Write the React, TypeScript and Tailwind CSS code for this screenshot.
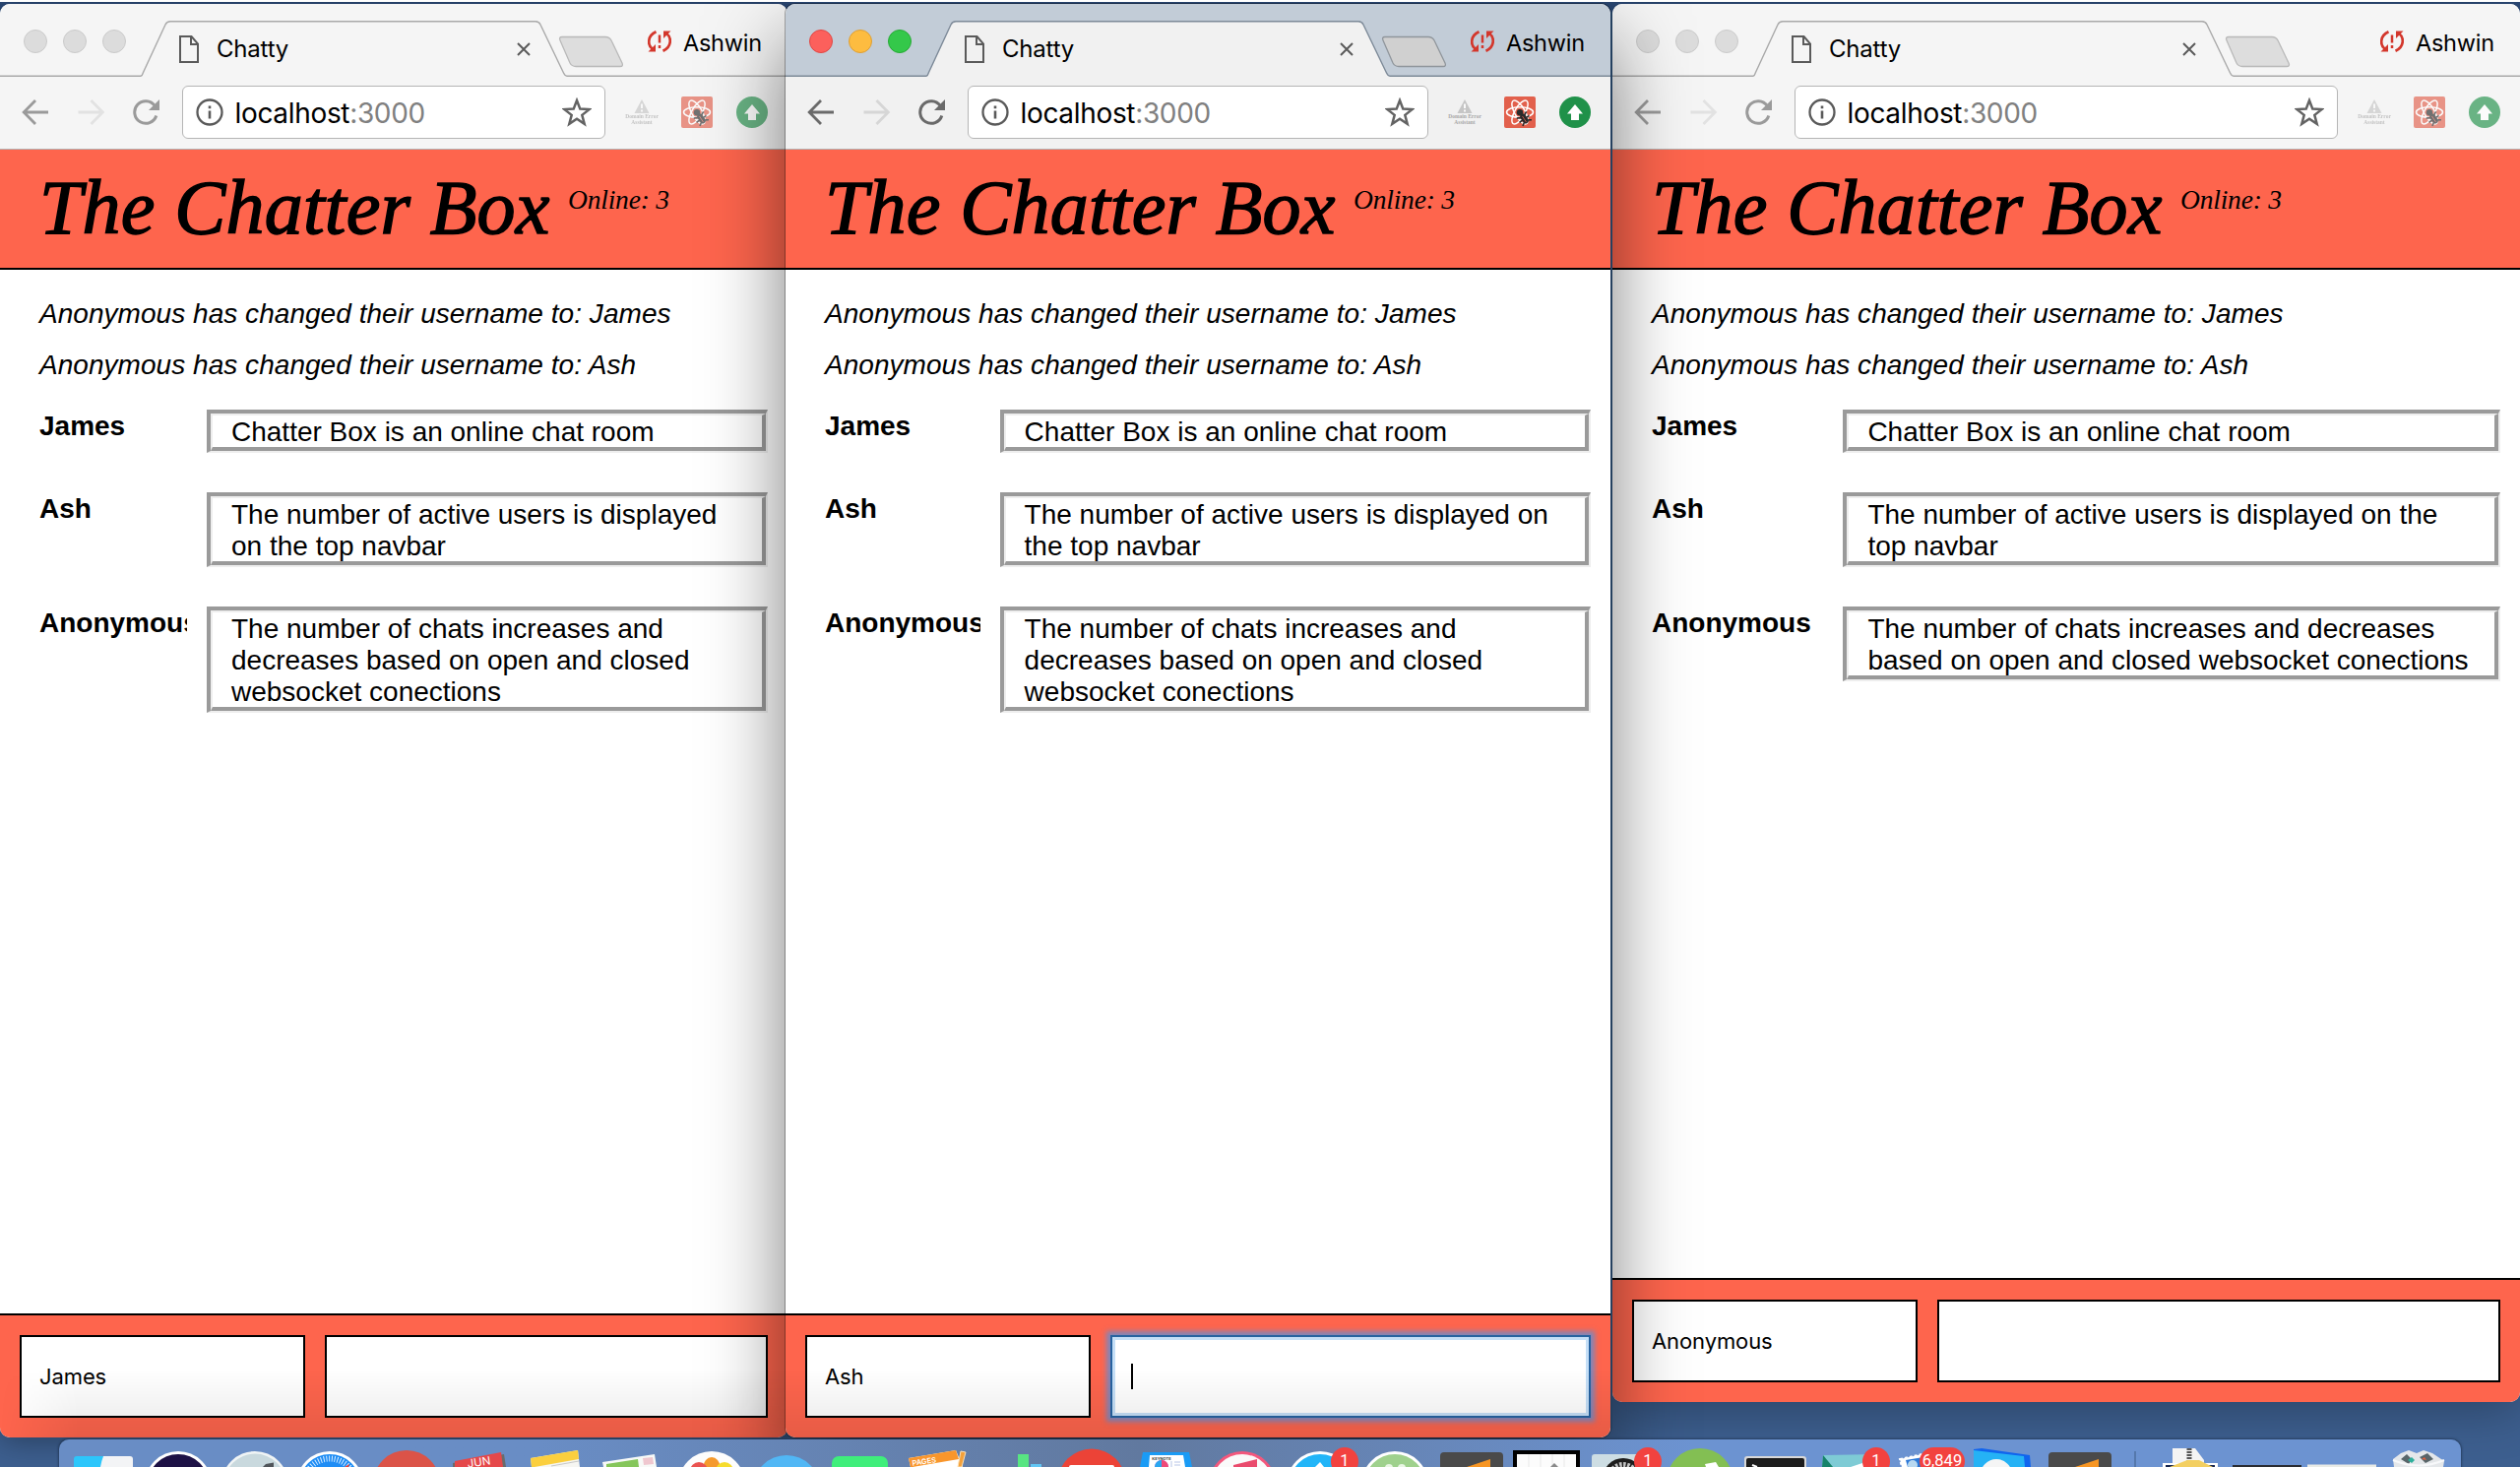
import React from "react";

type WinProps = {
  active?: boolean;
  width: number;
  frame: string;
  user: string;
};

const NOTICES = [
  "Anonymous has changed their username to: James",
  "Anonymous has changed their username to: Ash",
];

const MESSAGES = [
  { name: "James", text: "Chatter Box is an online chat room" },
  { name: "Ash", text: "The number of active users is displayed on the top navbar" },
  {
    name: "Anonymous",
    text: "The number of chats increases and decreases based on open and closed websocket conections",
  },
];

const MAX_TAB_RIGHT = 603;

function TabOutline({ width, active }: { width: number; active?: boolean }) {
  const r = Math.min(width - 252, MAX_TAB_RIGHT);
  const line = active ? "#7d8a98" : "#a9a9a9";
  const d = `M0 73.2 H143 Q144.5 73 145.3 70 L168 21 Q169.5 17.8 173 17.8 H${r - 4} Q${r - 0.5} 17.8 ${r + 1} 21 L${r + 24.5} 70 Q${r + 26} 73.2 ${r + 28} 73.2 H${width}`;
  return (
    <svg className="absolute left-0 top-0" width={width} height="74" viewBox={`0 0 ${width} 74`} fill="none">
      <path d={d + " V75 H0 Z"} fill={active ? "#f1f1f1" : "#f5f5f5"} />
      <path d={d} stroke={line} strokeWidth="1.4" />
      <path
        d={`M${r + 23} 33.5 H${r + 67} Q${r + 71} 33.5 ${r + 73} 37 L${r + 84} 60 Q${r + 85.5} 63.5 ${r + 82} 63.5 H${r + 37} Q${r + 33} 63.5 ${r + 31} 60 L${r + 21} 37 Q${r + 19.5} 33.5 ${r + 23} 33.5 Z`}
        fill={active ? "#d0d0d0" : "#dddddd"}
        stroke={active ? "#8f959b" : "#b9b9b9"}
        strokeWidth="1.3"
      />
    </svg>
  );
}

function ReactBadge() {
  return (
    <svg width="32" height="32" viewBox="0 0 32 32" fill="none">
      <rect width="32" height="32" rx="2" fill="#e2604c" />
      <g stroke="#fff" strokeWidth="1.5">
        <ellipse cx="16" cy="16" rx="13.5" ry="5.2" />
        <ellipse cx="16" cy="16" rx="13.5" ry="5.2" transform="rotate(60 16 16)" />
        <ellipse cx="16" cy="16" rx="13.5" ry="5.2" transform="rotate(120 16 16)" />
      </g>
      <circle cx="16" cy="16.2" r="3.2" fill="#2b2b2b" />
      <g transform="rotate(-35 20 22)" fill="#2b2b2b">
        <rect x="17.2" y="17.5" width="5.8" height="10.500" rx="2.800" />
        <path d="M14 18l4 2M14 23h4M14.5 28l3-2M26 18l-4 2M26 23h-4M25.5 28l-3-2" stroke="#2b2b2b" strokeWidth="1.600" />
      </g>
      <path d="M18.5 20l4 6" stroke="#e2604c" strokeWidth=".8" />
    </svg>
  );
}

function Chrome({ width, active }: { width: number; active?: boolean }) {
  const dots = active
    ? ["bg-[#fc605c] border-[#df4744]", "bg-[#fdbc40] border-[#de9f34]", "bg-[#34c84a] border-[#27aa35]"]
    : ["bg-[#dcdcdc] border-[#cbcbcb]", "bg-[#dcdcdc] border-[#cbcbcb]", "bg-[#dcdcdc] border-[#cbcbcb]"];
  const nav = active ? "#6a6a6a" : "#9a9a9a";
  const off = active ? "#d6d6d6" : "#e2e2e2";
  return (
    <div className="font-[Inter,sans-serif] text-black">
      <div className={`relative h-[74px] ${active ? "bg-[#c2ccd7]" : "bg-[#f5f5f5]"}`}>
        <TabOutline width={width} active={active} />
        <div className="relative flex items-start">
          <div className="flex gap-4 pl-6 pt-[26px]">
            {dots.map((c, i) => (
              <span key={i} className={`size-6 rounded-full border ${c}`} />
            ))}
          </div>
          <svg className="ml-[54px] mt-8" width="20" height="28" viewBox="0 0 20 28" fill="none" stroke="#5a5a5a" strokeWidth="2">
            <path d="M1 1 H12.5 L19 8.500 V27 H1 Z" />
            <path d="M12 1 V9 H19" />
          </svg>
          <span className="ml-[18px] mt-[31px] text-[24px] leading-[30px] tracking-[-0.2px]">Chatty</span>
          <div className="grow" />
          <svg className="mt-[39px]" width="14" height="14" viewBox="0 0 14 14" stroke="#5a5a5a" strokeWidth="2">
            <path d="M1 1 L13 13 M13 1 L1 13" />
          </svg>
          <div className={`flex items-start justify-end pr-[26px] ${width > 900 ? "w-[329px]" : "w-[261px]"}`}>
            <svg className="mt-[27px]" width="24" height="22" viewBox="0 0 24 22" fill="none" stroke="#d3372c" strokeWidth="2.7">
              <path d="M8.500 1.200 C-0.500 5 -0.500 15 5 19" />
              <path d="M15.500 20.800 C24.500 17 24.500 7 19 3" />
              <path d="M0.500 21.500 H8 V14 Z" fill="#d3372c" stroke="none" />
              <path d="M23.500 0.500 H16 V8 Z" fill="#d3372c" stroke="none" />
              <path d="M12 4.500 V12.500 M12 15 V18" strokeWidth="2.500" />
            </svg>
            <span className="ml-3 mt-[25px] text-[23.500px] leading-[30px] tracking-[-0.2px]">Ashwin</span>
          </div>
        </div>
      </div>
      <div className={`flex h-[74px] items-center border-b pb-px pr-5 ${active ? "border-[#b4b4b4] bg-[#f1f1f1]" : "border-[#b4b4b4] bg-[#f5f5f5]"}`}>
        <svg className="ml-[22px] shrink-0" width="28" height="26" viewBox="0 0 28 26" fill="none" stroke={nav} strokeWidth="2.800">
          <path d="M27 13 H2.500 M14 1 L2.200 13 L14 25" />
        </svg>
        <svg className="ml-[29px] shrink-0" width="28" height="26" viewBox="0 0 28 26" fill="none" stroke={off} strokeWidth="2.800">
          <path d="M0.500 13 H25 M13.500 1 L25.300 13 L13.500 25" />
        </svg>
        <svg className="ml-[27px] shrink-0" width="28" height="28" viewBox="0 0 28 28" fill="none" stroke={nav} strokeWidth="3">
          <path d="M23.300 7.500 A11.300 11.300 0 1 0 24.800 17.500" />
          <path d="M28 1 V12 H17 Z" fill={nav} stroke="none" />
        </svg>
        <div className="ml-[23px] flex h-[54px] grow items-center rounded-[6px] border-[1.500px] border-[#b5b5b5] bg-white pl-[12.500px] pr-[13px]">
          <svg width="28" height="28" viewBox="0 0 28 28" fill="none" stroke="#5a5a5a" strokeWidth="2.300">
            <circle cx="14" cy="14" r="12.500" />
            <path d="M14 12.500 V20.500 M14 7.500 V10.300" strokeWidth="2.600" />
          </svg>
          <span className="ml-3 mt-[2px] text-[28px] leading-[34px] tracking-[-0.33px]">
            localhost<span className="text-[#808080]">:3000</span>
          </span>
          <div className="grow" />
          <svg width="30" height="30" viewBox="0 0 30 30" fill="none" stroke="#636363" strokeWidth="2.500">
            <path d="M15 3 L18.300 11.600 L27.500 12.100 L20.300 17.900 L22.700 26.800 L15 21.800 L7.300 26.800 L9.700 17.900 L2.500 12.100 L11.700 11.600 Z" />
          </svg>
        </div>
        <div className={`ml-[21px] flex items-center gap-6 ${active ? "" : "opacity-65"}`}>
          <div className="flex w-8 flex-col items-center">
            <svg width="16" height="14" viewBox="0 0 16 14">
              <path d="M8 0 L15.500 14 H0.500 Z" fill="#c6c6c6" />
              <path d="M8 4.500 V9 M8 10.500 V12.500" stroke="#fff" strokeWidth="1.800" />
            </svg>
            <span className="mt-px whitespace-nowrap text-center font-['Liberation_Serif',serif] text-[5.500px] font-bold leading-[5.500px] text-[#a8a8a8]">
              Domain Error
              <br />
              Assistant
            </span>
          </div>
          <ReactBadge />
          <svg width="32" height="32" viewBox="0 0 32 32">
            <circle cx="16" cy="16" r="16" fill="#1f9149" />
            <path d="M16 8 L24 17.500 H20 V24 H12 V17.500 H8 Z" fill="#fff" />
          </svg>
        </div>
      </div>
    </div>
  );
}

function ChatWindow({ active, width, frame, user }: WinProps) {
  return (
    <section className={`absolute top-1 flex flex-col overflow-hidden rounded-[10px] bg-white ${frame}`}>
      <Chrome width={width} active={active} />
      <header className="flex h-[122px] shrink-0 items-start border-b-2 border-black bg-[#fe654d] pl-10 font-['Apple_Chancery','Liberation_Serif',serif] italic text-black">
        <h1 className="mt-[9px] w-[537px] shrink-0 whitespace-nowrap text-[78px] leading-[100px] tracking-[0.2px] [-webkit-text-stroke:1.500px_black]">
          The Chatter Box
        </h1>
        <span className="mt-[33px] whitespace-nowrap text-[27.500px] leading-9 tracking-[-0.2px]">Online: 3</span>
      </header>
      <main className="grow pl-10 pr-5 pt-[29px] font-['Liberation_Sans',sans-serif] text-[28px] leading-8 text-black">
        <div className="flex flex-col gap-5 italic">
          {NOTICES.map((n) => (
            <p key={n} className="whitespace-nowrap tracking-[0.04px]">{n}</p>
          ))}
        </div>
        <div className="mt-[29px] flex flex-col gap-10">
          {MESSAGES.map((m) => (
            <div key={m.name} className="flex items-start gap-5">
              <div className="w-[calc((100%+10px)/5)] shrink-0 overflow-hidden pt-px font-bold">{m.name}</div>
              <div className="grow border-b-2 border-l-4 border-r-2 border-t-4 border-b-[#eeeeee] border-l-[#9a9a9a] border-r-[#eeeeee] border-t-[#9a9a9a]">
                <div className="border-b-4 border-l-2 border-r-4 border-t-2 border-b-[#9a9a9a] border-l-[#eeeeee] border-r-[#9a9a9a] border-t-[#eeeeee] pl-[19px] pr-5">
                  <p className="-mb-px pt-px">{m.text}</p>
                </div>
              </div>
            </div>
          ))}
        </div>
      </main>
      <footer className="flex h-[126px] shrink-0 gap-5 border-t-2 border-black bg-[#fe654d] px-5 pt-5 font-[Inter,sans-serif] text-[22px] text-black">
        <div className="flex h-[84px] w-[290px] shrink-0 items-center border-2 border-black bg-white pl-[18px] leading-7 tracking-[-0.1px]">
          {user}
        </div>
        {active ? (
          <div className="flex h-[84px] grow items-center border-2 border-[#2763a0] bg-white pl-[19px] shadow-[0_0_5px_4px_rgba(106,140,205,0.85),inset_0_0_0_3px_#c5dff7]">
            <span className="h-[26px] w-0.5 bg-black" />
          </div>
        ) : (
          <div className="h-[84px] grow border-2 border-black bg-white" />
        )}
      </footer>
    </section>
  );
}

function CountBadge({ x, w, label }: { x: number; w: number; label: string }) {
  return (
    <g>
      <rect x={x - w / 2} y="8" width={w} height="29" rx="14.500" fill="#f2423f" />
      <text x={x} y="27" textAnchor="middle" fontSize="16.500" fill="#fff" fontFamily="Roboto, sans-serif">
        {label}
      </text>
    </g>
  );
}

function Sublime({ x }: { x: number }) {
  return (
    <g>
      <rect x={x - 32} y="13" width="64" height="60" rx="4" fill="#4a4a4a" />
      <path d={`M${x - 14} 31 L${x + 19} 20 V40 H${x - 14} Z`} fill="#f79522" />
    </g>
  );
}

function DockIcons() {
  return (
    <svg className="block" width="2440" height="28" viewBox="60 0 2440 28">
      <path d="M78 17 H165 L160 28 H75 V20 Q75 17 78 17" fill="none" />
      <path d="M78 17 H107 L102 28 H75 V20 Q75 17 78 17" fill="#2cc6fb" />
      <path d="M105 17 H132 Q135 17 135 20 V28 H102 Q103 22 105 17" fill="#f3f4f6" />

      <circle cx="181" cy="46" r="34" fill="#fff" />
      <circle cx="181" cy="46" r="31" fill="#1d1145" />
      <circle cx="259" cy="46" r="34" fill="#f0f4f5" />
      <circle cx="259" cy="46" r="31.500" fill="#c9d9de" />
      <path d="M267 28 L270 25 L278 23.500 V28 Z" fill="#50555a" />
      <circle cx="335" cy="46" r="34" fill="#fff" />
      <circle cx="335" cy="46" r="31" fill="#1f8df5" />
      <circle cx="335" cy="46" r="26.500" fill="none" stroke="#d8ecff" strokeWidth="6" strokeDasharray="1 1.800" />
      <path d="M350 28 L355 25 L354 28 Z" fill="#f23b30" />
      <circle cx="413" cy="45" r="34" fill="#db5348" />

      <path d="M460 24 L512 15 L514 28 H460 Z" fill="#6b6b6b" />
      <path d="M462 22 L509 13 L511 28 H462 Z" fill="#e5484a" />
      <text x="487" y="27" textAnchor="middle" fontSize="11.500" fill="#fff" fontFamily="Inter, sans-serif" transform="rotate(-8 487 26)">
        JUN
      </text>

      <path d="M539 19 L587 11 L589 28 H540 Z" fill="#f6f6f2" />
      <path d="M539 19 L587 11 L588 20 L543 28 H540 Z" fill="#fbcf3e" />
      <path d="M560 27 L588 22" stroke="#c8c8c8" />

      <path d="M612 23 L665 15 L667 28 H613 Z" fill="#f7f9f7" />
      <path d="M616 25 L648 20 L649 28 H616 Z" fill="#85c65b" />
      <path d="M653 19 L663 18 L664 25 L654 26 Z" fill="#efc7cf" />

      <circle cx="723" cy="46" r="34" fill="#fdfdfd" />
      <ellipse cx="723" cy="28" rx="8.500" ry="10" fill="#f59a2d" />
      <circle cx="710" cy="32" r="9" fill="#ea5350" />
      <circle cx="736" cy="32" r="9" fill="#f6dc2e" />
      <circle cx="799" cy="50" r="34" fill="#51b7f5" />
      <rect x="845" y="17" width="57" height="40" rx="7" fill="#3fee7b" />

      <path d="M923 19 L971 11 L978 28 H925 Z" fill="#fff" />
      <path d="M923 19 L971 11 L974 20 L927 28 H925 Z" fill="#f9962c" />
      <text x="939" y="25" textAnchor="middle" fontSize="7.500" fill="#fff" fontWeight="600" fontFamily="Inter, sans-serif" transform="rotate(-8 939 24)">
        PAGES
      </text>
      <path d="M973 28 L976 12 L981 13 L977 28 Z" fill="#f4a13b" stroke="#fde2b8" strokeWidth="1" />

      <rect x="1034" y="15" width="11" height="20" fill="#58e582" />
      <rect x="1047" y="25" width="11" height="10" fill="#62c6f4" />
      <circle cx="1109" cy="44" r="34.500" fill="#ec4337" />
      <rect x="1086" y="26" width="46" height="6" rx="2" fill="#fff" />

      <path d="M1161 13 H1208 L1211 28 H1158 Z" fill="#1a9bf5" />
      <path d="M1168 16 H1202 L1204 28 H1167 Z" fill="#fff" />
      <text x="1180" y="20.500" textAnchor="middle" fontSize="4" fontWeight="700" fill="#444" fontFamily="Inter, sans-serif">
        KEYNOTE
      </text>
      <circle cx="1180" cy="28" r="7" fill="#c649d8" />
      <path d="M1180 28 V21 A7 7 0 0 0 1173 28 Z" fill="#2aa7f0" />
      <path d="M1180 28 V21 A7 7 0 0 1 1187 28 Z" fill="#ef4a78" />
      <path d="M1190 22 V28 M1193 23 H1199 M1193 26 H1199" stroke="#b8c6e8" />

      <circle cx="1262" cy="46" r="34" fill="#f3587d" />
      <circle cx="1262" cy="46" r="31" fill="#fafafa" />
      <path d="M1253 28 V26 L1277 20 V28 Z" fill="#ea4b6d" />
      <circle cx="1341" cy="46" r="34" fill="#fff" />
      <circle cx="1341" cy="46" r="31" fill="#22b5f8" />
      <path d="M1336 28 L1341 23 L1345 28 Z" fill="#fff" />
      <circle cx="1417" cy="46" r="34" fill="#fff" />
      <circle cx="1417" cy="46" r="31" fill="#9fd18d" />
      <circle cx="1411" cy="29" r="4" fill="#e9f6e4" />
      <circle cx="1424" cy="29" r="4" fill="#e9f6e4" />
      <Sublime x={1495} />

      <rect x="1537" y="11" width="68" height="40" fill="#000" />
      <rect x="1541" y="15" width="60" height="40" fill="#fcfcfc" />
      <path d="M1553 15 V28 M1565 15 V28 M1577 15 V28 M1589 15 V28" stroke="#e8e8e8" />
      <path d="M1575 28 L1579 24 L1583 28 Z" fill="#8a8a8a" />
      <path d="M1617 18 Q1617 15 1620 15 H1670 V28 H1617 Z" fill="#cddde3" />
      <circle cx="1649" cy="40" r="21" fill="#1d1d1d" />
      <circle cx="1649" cy="40" r="14.500" fill="none" stroke="#c4c4c4" strokeWidth="5" strokeDasharray="2.500 1.500" />
      <circle cx="1727" cy="43" r="34" fill="#83bf53" />
      <path d="M1732 25 L1743 23 L1746 28 H1733 Z" fill="#fff" />

      <rect x="1772" y="17" width="63" height="40" rx="3" fill="#d8d8d8" />
      <rect x="1774" y="19" width="59" height="40" rx="2" fill="#1c1c1c" />
      <path d="M1780 26 L1785 28" stroke="#fff" strokeWidth="2" />
      <path d="M1852 16 L1908 15 V28 H1851 Z" fill="#7ecbd5" />
      <path d="M1852 16 L1862 28 H1851 Z" fill="#16836a" />
      <path d="M1880 28 L1892 24 L1900 28 Z" fill="#fff" />

      <path d="M1930 20 L1962 13 L1970 28 H1932 Z" fill="#fff" stroke="#fff" strokeWidth="2" strokeDasharray="3 2" />
      <path d="M1936 21 L1960 17 V28 H1938 Z" fill="#2c78d8" />
      <circle cx="1943" cy="26" r="5" fill="#b8d8f0" />

      <path d="M2005 10 L2013 9 L2062 16 L2063 28 H2005 Z" fill="#1064ee" />
      <path d="M2005 11 L2056 17 L2057 28 H2005 Z" fill="#25b2f5" />
      <circle cx="2028" cy="36" r="16" fill="#f5f5f5" />
      <Sublime x={2113} />
      <path d="M2169 12 V28" stroke="#4e6f9f" strokeWidth="1.500" />

      <path d="M2207 9 H2230 L2239 21 V28 H2207 Z" fill="#f4f4f4" />
      <path d="M2224 9 V22" stroke="#555" strokeWidth="5" strokeDasharray="2 1" />
      <rect x="2197" y="24" width="56" height="10" fill="#fff" />
      <rect x="2200" y="26" width="50" height="10" fill="#14244f" />
      <path d="M2204 28 L2222 21 H2234 L2248 28 Z" fill="#f3cf61" />
      <rect x="2268" y="26" width="70" height="8" fill="#2a2d33" />
      <rect x="2344" y="25.500" width="70" height="8" fill="#e9ebe6" />
      <path d="M2431 20 L2439 14 L2447 11 L2455 14 L2462 11 L2471 14 L2483 22 L2482 28 H2432 Z" fill="#e4e7ea" />
      <path d="M2439 20 L2445 15 L2450 20 L2447 25 Z M2458 18 L2466 14 L2472 20 L2464 24 Z" fill="#59666a" />
      <path d="M2446 21 l4 -3 l3 3 l-3 3 Z" fill="#2eb09c" />
      <path d="M2460 20 l3 -2 l2 3 Z" fill="#e06040" />
      <path d="M2431 21 Q2457 32 2483 21" stroke="#f7f8fa" strokeWidth="2" fill="none" />

      <CountBadge x={1366} w={28} label="1" />
      <CountBadge x={1674} w={28} label="1" />
      <CountBadge x={1906} w={28} label="1" />
      <CountBadge x={1973} w={46} label="6,849" />
    </svg>
  );
}

export default function App() {
  return (
    <div className="relative h-[1490px] w-[2560px] overflow-hidden border-t-2 border-white bg-[#3d5f8f]">
      <div className="absolute -top-0.5 left-0 h-[1490px] w-[2560px]">
        <div className="absolute left-0 top-0.5 h-12 w-full bg-[#2c4a77]" />
        <ChatWindow width={800} frame="left-0 h-[1456px] w-[800px] shadow-[0_4px_30px_rgba(0,0,0,0.35)]" user="James" />
        <ChatWindow width={922} frame="left-[1638px] h-[1420px] w-[922px] shadow-[0_8px_50px_rgba(0,0,0,0.3)]" user="Anonymous" />
        <ChatWindow
          active
          width={838}
          frame="left-[798px] h-[1456px] w-[838px] shadow-[0_0_0_1px_rgba(0,0,0,0.3),0_36px_80px_rgba(0,0,0,0.52)]"
          user="Ash"
        />
        <div className="absolute left-[1636px] top-3 h-[1440px] w-0.5 bg-[#24405f]" />
        <div className="absolute left-0 top-[1390px] h-[70px] w-[1636px] rounded-b-[10px] bg-linear-to-b from-transparent to-black/9 [mask-image:linear-gradient(to_right,transparent,black_80px)]" />
        <div className="absolute left-[60px] top-[1462px] h-7 w-[2440px] overflow-hidden rounded-t-[10px] bg-linear-to-r from-[#698dc5] from-20% via-[#61799f] via-45% to-[#6c93d1] to-68% shadow-[0_0_2px_1px_rgba(20,35,60,0.5)]">
          <DockIcons />
        </div>
      </div>
    </div>
  );
}
